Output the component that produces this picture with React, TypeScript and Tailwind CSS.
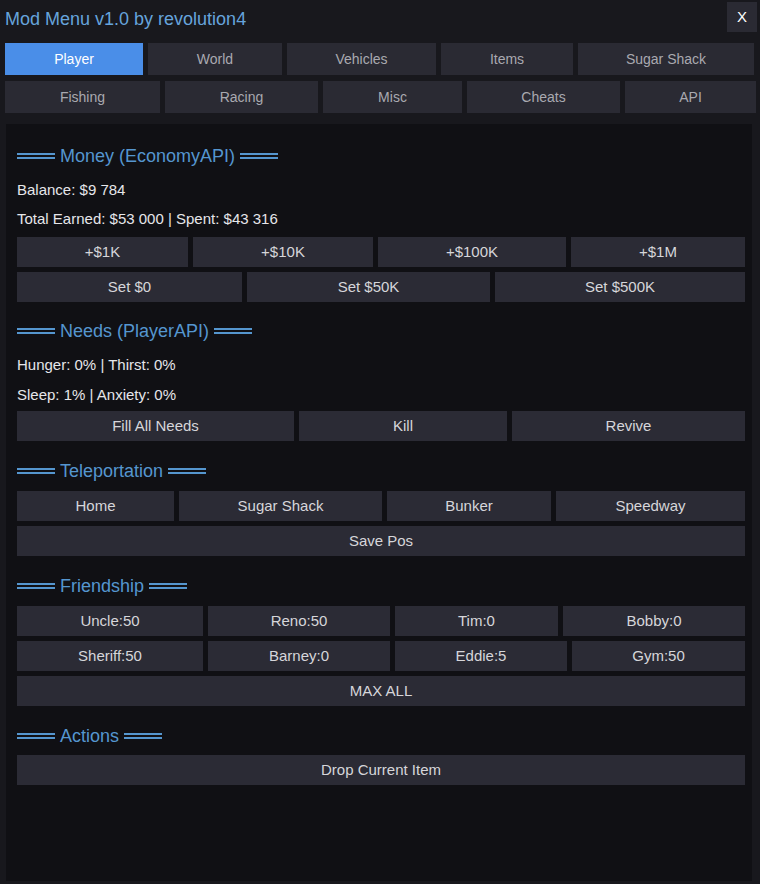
import React from 'react'

const font = { fontFamily: '"Liberation Sans", Arial, sans-serif' }

function Btn({ label }: { label: string }) {
  return (
    <div className="flex items-center justify-center h-[30px] text-[15px] bg-[#2b2b35] text-[#d6d6da]">
      {label}
    </div>
  )
}

function Tab({ label, active = false }: { label: string; active?: boolean }) {
  return (
    <div
      className={`flex items-center justify-center h-[32px] text-[14px] ${
        active ? 'bg-[#4a8ee8] text-white' : 'bg-[#2a2a33] text-[#a9a9b0]'
      }`}
    >
      {label}
    </div>
  )
}

function Header({ title }: { title: string }) {
  return (
    <div className="flex items-center gap-[5px] h-[22px] text-[18px] text-[#5596cf]">
      <span className="block w-[38px] h-[6px] border-y-2 border-[#5596cf]" />
      <span>{title}</span>
      <span className="block w-[38px] h-[6px] border-y-2 border-[#5596cf]" />
    </div>
  )
}

export default function App() {
  return (
    <div className="w-[760px] h-[884px] bg-[#18181d] overflow-hidden" style={font}>
      {/* title bar */}
      <div className="flex items-start justify-between h-[43px] pl-[5px] pr-[3px]">
        <span className="mt-[6px] text-[18px] text-[#66a4dc]">Mod Menu v1.0 by revolution4</span>
        <div className="mt-[2px] w-[30px] h-[30px] bg-[#2a2a33] text-white text-[15px] flex items-center justify-center">
          X
        </div>
      </div>

      {/* tabs */}
      <div className="pl-[5px] pr-[3px] flex flex-col gap-[6px]">
        <div className="grid grid-cols-[138px_134px_149px_132px_176px] gap-[5px]">
          <Tab label="Player" active />
          <Tab label="World" />
          <Tab label="Vehicles" />
          <Tab label="Items" />
          <Tab label="Sugar Shack" />
        </div>
        <div className="grid grid-cols-[155px_153px_139px_153px_131px] gap-[5px]">
          <Tab label="Fishing" />
          <Tab label="Racing" />
          <Tab label="Misc" />
          <Tab label="Cheats" />
          <Tab label="API" />
        </div>
      </div>

      {/* content panel */}
      <div className="mt-[11px] ml-[6px] w-[746px] h-[757px] bg-[#101014] pl-[11px] pt-[21px]">
        <div className="w-[728px] flex flex-col">
          <Header title="Money (EconomyAPI)" />
          <div className="mt-[14px] text-[15px] text-[#e6e6ea] leading-[17px]">Balance: $9 784</div>
          <div className="mt-[12px] text-[15px] text-[#e6e6ea] leading-[17px]">Total Earned: $53 000 | Spent: $43 316</div>
          <div className="mt-[10px] grid grid-cols-[171px_180px_188px_1fr] gap-[5px]">
            <Btn label="+$1K" />
            <Btn label="+$10K" />
            <Btn label="+$100K" />
            <Btn label="+$1M" />
          </div>
          <div className="mt-[5px] grid grid-cols-[225px_243px_1fr] gap-[5px]">
            <Btn label="Set $0" />
            <Btn label="Set $50K" />
            <Btn label="Set $500K" />
          </div>

          <div className="mt-[18px]">
            <Header title="Needs (PlayerAPI)" />
          </div>
          <div className="mt-[14px] text-[15px] text-[#e6e6ea] leading-[17px]">Hunger: 0% | Thirst: 0%</div>
          <div className="mt-[13px] text-[15px] text-[#e6e6ea] leading-[17px]">Sleep: 1% | Anxiety: 0%</div>
          <div className="mt-[8px] grid grid-cols-[277px_208px_1fr] gap-[5px]">
            <Btn label="Fill All Needs" />
            <Btn label="Kill" />
            <Btn label="Revive" />
          </div>

          <div className="mt-[19px]">
            <Header title="Teleportation" />
          </div>
          <div className="mt-[9px] grid grid-cols-[157px_203px_164px_1fr] gap-[5px]">
            <Btn label="Home" />
            <Btn label="Sugar Shack" />
            <Btn label="Bunker" />
            <Btn label="Speedway" />
          </div>
          <div className="mt-[5px]">
            <Btn label="Save Pos" />
          </div>

          <div className="mt-[19px]">
            <Header title="Friendship" />
          </div>
          <div className="mt-[9px] grid grid-cols-[186px_182px_163px_1fr] gap-[5px]">
            <Btn label="Uncle:50" />
            <Btn label="Reno:50" />
            <Btn label="Tim:0" />
            <Btn label="Bobby:0" />
          </div>
          <div className="mt-[5px] grid grid-cols-[186px_182px_172px_1fr] gap-[5px]">
            <Btn label="Sheriff:50" />
            <Btn label="Barney:0" />
            <Btn label="Eddie:5" />
            <Btn label="Gym:50" />
          </div>
          <div className="mt-[5px]">
            <Btn label="MAX ALL" />
          </div>

          <div className="mt-[19px]">
            <Header title="Actions" />
          </div>
          <div className="mt-[8px]">
            <Btn label="Drop Current Item" />
          </div>
        </div>
      </div>
    </div>
  )
}
